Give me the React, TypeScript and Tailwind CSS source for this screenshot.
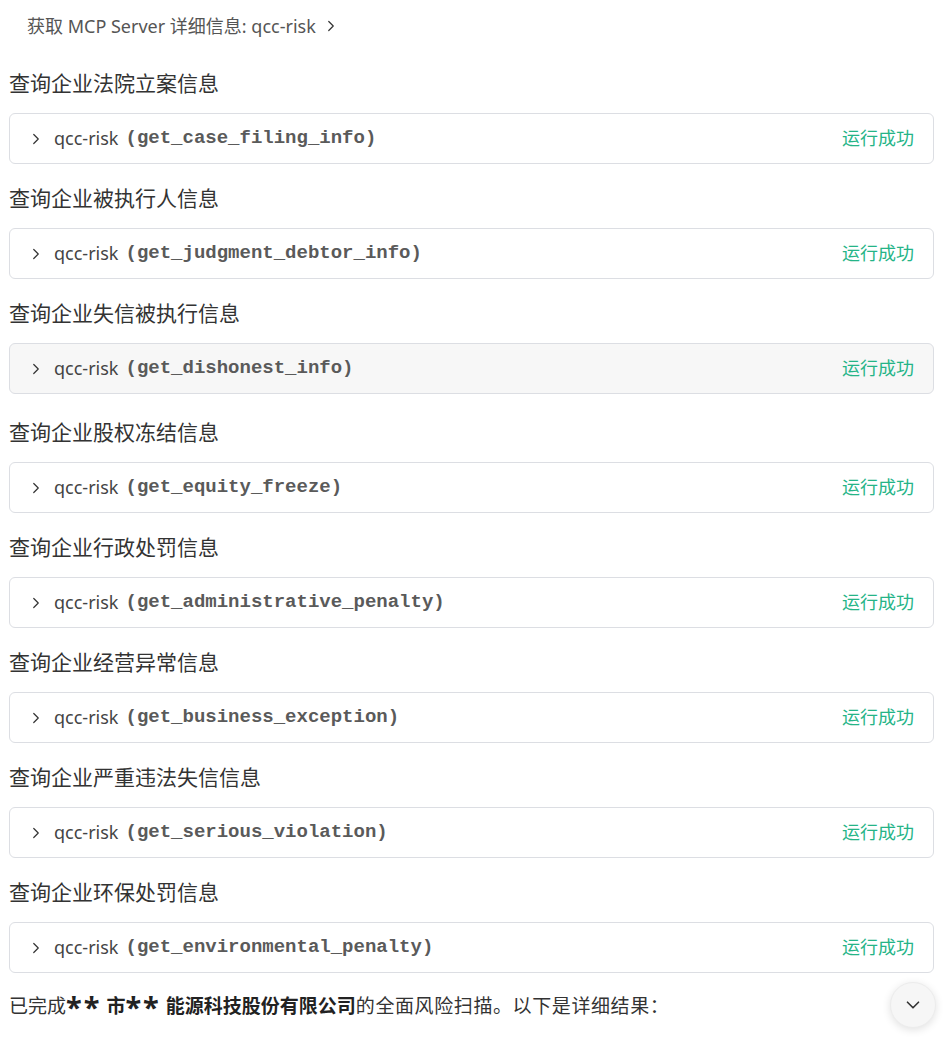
import React from "react";
import { ChevronRight, ChevronDown } from "lucide-react";

type Call = { title: string; tool: string; active?: boolean };

const calls: Call[] = [
  { title: "查询企业法院立案信息", tool: "get_case_filing_info" },
  { title: "查询企业被执行人信息", tool: "get_judgment_debtor_info" },
  { title: "查询企业失信被执行信息", tool: "get_dishonest_info", active: true },
  { title: "查询企业股权冻结信息", tool: "get_equity_freeze" },
  { title: "查询企业行政处罚信息", tool: "get_administrative_penalty" },
  { title: "查询企业经营异常信息", tool: "get_business_exception" },
  { title: "查询企业严重违法失信信息", tool: "get_serious_violation" },
  { title: "查询企业环保处罚信息", tool: "get_environmental_penalty" },
];

const sans = "font-['Noto_Sans','Noto_Sans_CJK_SC',sans-serif]";

function ToolCall({ call }: { call: Call }) {
  return (
    <div className={`flex flex-col ${call.active ? "mb-[4px]" : ""}`}>
      <h3 className="text-[21px] leading-[28px] text-[#333] font-normal">{call.title}</h3>
      <div
        className={`mt-[16px] h-[51px] flex items-center justify-between rounded-[6px] border border-[#dcdee3] pl-[17px] pr-[19px] ${
          call.active ? "bg-[#f7f7f7]" : "bg-white"
        }`}
      >
        <div className="flex items-center">
          <ChevronRight size={18} strokeWidth={1.6} className="text-[#333]" />
          <span className="ml-[9px] text-[18px] text-[#444]">qcc-risk</span>
          <span className="ml-[7px] font-['Liberation_Mono',monospace] font-bold text-[19px] text-[#5a5a5a]">
            ({call.tool})
          </span>
        </div>
        <span className="text-[18px] text-[#25b487]">运行成功</span>
      </div>
    </div>
  );
}

function Stars() {
  return <span className="text-[29px] leading-none tracking-[2px] align-[-5px]">**</span>;
}

export default function App() {
  return (
    <div className={`relative w-[947px] h-[1044px] overflow-hidden bg-white ${sans}`}>
      <div className="pl-[8px] pr-[13px] pt-[12px]">
        <div className="flex items-center pl-[19px] h-[28px] text-[18px] text-[#555]">
          <span>获取 MCP Server 详细信息: qcc-risk</span>
          <ChevronRight size={18} strokeWidth={1.6} className="ml-[6px] text-[#333]" />
        </div>
        <div className="mt-[29px] flex flex-col gap-[20px] pl-[1px]">
          {calls.map((c) => (
            <ToolCall key={c.tool} call={c} />
          ))}
        </div>
        <p className="mt-[19px] pl-[1px] h-[28px] text-[19px] leading-[28px] text-[#333]">
          已完成
          <strong className="font-bold text-[#222]">
            <Stars /> 市<Stars /> 能源科技股份有限公司
          </strong>
          <span className="tracking-[0.6px]">的全面风险扫描。以下是详细结果：</span>
        </p>
      </div>
      <button className="absolute left-[890px] top-[982px] w-[46px] h-[46px] rounded-full bg-[#f6f6f6] border border-[#ececec] shadow-[0_2px_8px_rgba(0,0,0,0.12)] flex items-center justify-center">
        <ChevronDown size={22} strokeWidth={1.8} className="text-[#333]" />
      </button>
    </div>
  );
}
